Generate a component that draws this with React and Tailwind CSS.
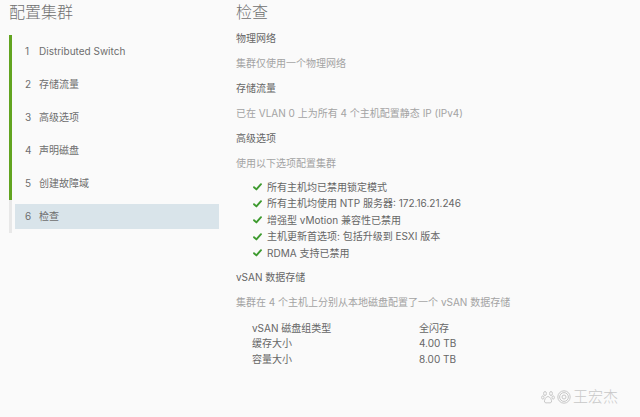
import React from 'react';

const steps = [
  { n: 1, label: 'Distributed Switch', done: true },
  { n: 2, label: '存储流量', done: true },
  { n: 3, label: '高级选项', done: true },
  { n: 4, label: '声明磁盘', done: true },
  { n: 5, label: '创建故障域', done: true },
  { n: 6, label: '检查', done: false, active: true },
];

const checks = [
  '所有主机均已禁用锁定模式',
  '所有主机均使用 NTP 服务器: 172.16.21.246',
  '增强型 vMotion 兼容性已禁用',
  '主机更新首选项: 包括升级到 ESXI 版本',
  'RDMA 支持已禁用',
];

const rows = [
  ['vSAN 磁盘组类型', '全闪存'],
  ['缓存大小', '4.00 TB'],
  ['容量大小', '8.00 TB'],
];

const Check = () => (
  <svg className="w-[9px] h-[8px] mr-[5px] shrink-0" viewBox="0 0 9 8">
    <path d="M1 4.2 L3.4 6.4 L8 1.2" fill="none" stroke="#3d9a2e" strokeWidth="1.9" strokeLinecap="round" strokeLinejoin="round" />
  </svg>
);

const App = () => {
  return (
    <div
      className="relative w-[640px] h-[417px] overflow-hidden bg-[#fafafa] flex"
      style={{ fontFamily: '"Inter", "Noto Sans CJK SC", sans-serif' }}
    >
      {/* left: wizard steps */}
      <div className="w-[227px] pl-[9px] shrink-0">
        <div className="h-[24px] leading-[24px] text-[16px] font-light text-[#707070]">配置集群</div>
        <div className="mt-[11px]">
          {steps.map((s) => (
            <div
              key={s.n}
              className={`h-[33px] border-l-[3px] ${s.done ? 'border-[#62a420]' : 'border-[#e8e8e8]'} ${s.active ? 'py-[4px] pl-[3px]' : ''}`}
            >
              <div
                className={`h-full flex items-center text-[10px] text-[#6e6e6e] ${s.active ? 'bg-[#d9e4ea] pl-[10px] w-[204px]' : 'pl-[13px]'}`}
              >
                <span className="w-[14px]">{s.n}</span>
                <span>{s.label}</span>
              </div>
            </div>
          ))}
        </div>
      </div>

      {/* right: review */}
      <div className="flex-1 pl-[9px] text-[10px]">
        <div className="h-[24px] leading-[24px] text-[16px] font-light text-[#707070]">检查</div>
        <div className="mt-[2px]">
          <div className="h-[25px] leading-[25px] text-[#666]">物理网络</div>
          <div className="h-[25px] leading-[25px] text-[#a3a3a3]">集群仅使用一个物理网络</div>
          <div className="h-[25px] leading-[25px] text-[#666]">存储流量</div>
          <div className="h-[25px] leading-[25px] text-[#a3a3a3]">已在 VLAN 0 上为所有 4 个主机配置静态 IP (IPv4)</div>
          <div className="h-[25px] leading-[25px] text-[#666]">高级选项</div>
          <div className="h-[25px] leading-[25px] text-[#a3a3a3]">使用以下选项配置集群</div>
        </div>
        <div className="mt-[3px] pl-[17px]">
          {checks.map((c) => (
            <div key={c} className="h-[16.5px] flex items-center text-[#666]">
              <Check />
              <span>{c}</span>
            </div>
          ))}
        </div>
        <div className="mt-[3px]">
          <div className="h-[25px] leading-[25px] text-[#666]">vSAN 数据存储</div>
          <div className="h-[25px] leading-[25px] text-[#a3a3a3]">集群在 4 个主机上分别从本地磁盘配置了一个 vSAN 数据存储</div>
        </div>
        <div className="mt-[6px] pl-[16px]">
          {rows.map(([k, v]) => (
            <div key={k} className="h-[15.5px] flex items-center text-[#666]">
              <span className="w-[167px]">{k}</span>
              <span>{v}</span>
            </div>
          ))}
        </div>
      </div>

      {/* watermark */}
      <div className="absolute left-[541px] top-[389px] flex items-center gap-[2px] text-[#c8c8c8]">
        <svg className="w-[14px] h-[14px]" viewBox="0 0 14 14" fill="none" stroke="#c8c8c8" strokeWidth="1">
          <ellipse cx="4" cy="3.5" rx="1.4" ry="2" />
          <ellipse cx="10" cy="3.5" rx="1.4" ry="2" />
          <ellipse cx="1.8" cy="7.5" rx="1.2" ry="1.6" />
          <ellipse cx="12.2" cy="7.5" rx="1.2" ry="1.6" />
          <path d="M7 6.5 C5 6.5 3 10 3.5 12 C4 13.2 6 12.8 7 12.8 C8 12.8 10 13.2 10.5 12 C11 10 9 6.5 7 6.5 Z" />
        </svg>
        <svg className="w-[14px] h-[14px]" viewBox="0 0 14 14" fill="none" stroke="#c8c8c8" strokeWidth="1">
          <circle cx="7" cy="7" r="6.2" />
          <circle cx="7" cy="7" r="4.4" />
          <circle cx="7" cy="7" r="2" />
        </svg>
        <span className="text-[15px] leading-[16px] font-light">王宏杰</span>
      </div>
    </div>
  );
};

export default App;
